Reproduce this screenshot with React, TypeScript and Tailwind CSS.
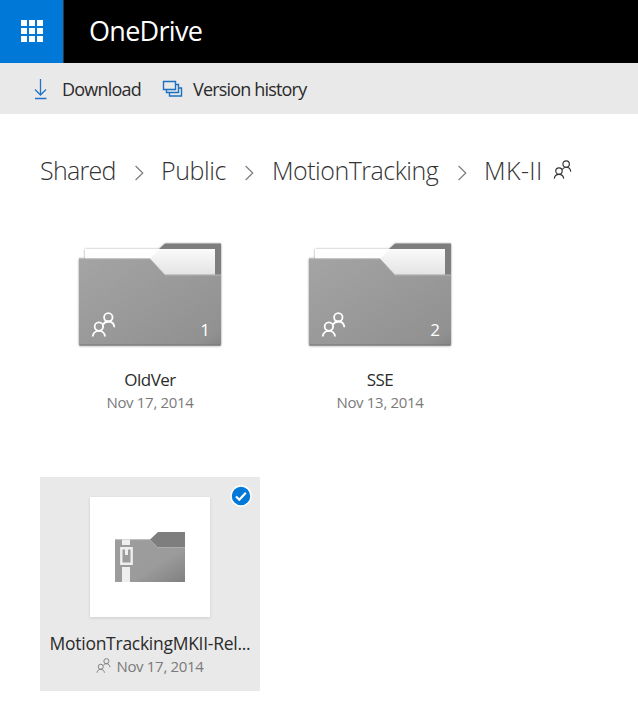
import React from 'react';

function People({ size, stroke, className = '' }: { size: number; stroke: number; className?: string }) {
  return (
    <svg width={size} height={size} viewBox="0 0 24 26" fill="none" stroke="currentColor" strokeWidth={stroke} className={`shrink-0 ${className}`}>
      <circle cx="17" cy="5.500" r="4.400" />
      <path d="M11.500 13c1.300-2 3.200-3.100 5.500-3.100 3.500 0 6 2.400 6.300 6" />
      <circle cx="7.200" cy="15.200" r="4.400" />
      <path d="M.8 25.500c.3-3.500 2.900-5.900 6.400-5.900s6.100 2.400 6.400 5.900" />
    </svg>
  );
}

function Chevron() {
  return (
    <svg width="9" height="16" viewBox="0 0 9 16" fill="none" stroke="#777" strokeWidth="1.1" className="mt-[5px] shrink-0">
      <path d="M.6 1 7.800 8 .6 15" />
    </svg>
  );
}

function Folder({ id, count }: { id: string; count: string }) {
  return (
    <div className="grid h-[106px] w-[146px]">
      <svg width="146" height="106" viewBox="0 0 146 106" className="col-start-1 row-start-1">
        <defs>
          <linearGradient id={`${id}-front`} x1="0" y1="0" x2="1" y2="1">
            <stop offset="0" stopColor="#a4a4a4" />
            <stop offset=".9" stopColor="#919191" />
            <stop offset="1" stopColor="#858585" />
          </linearGradient>
          <linearGradient id={`${id}-paper`} x1="0" y1="0" x2="0" y2="1">
            <stop offset="0" stopColor="#fafafa" />
            <stop offset="1" stopColor="#e4e4e4" />
          </linearGradient>
          <filter id={`${id}-shadow`} x="-5%" y="-5%" width="110%" height="110%">
            <feDropShadow dx="0" dy=".3" stdDeviation="1" floodColor="#000" floodOpacity=".45" />
          </filter>
        </defs>
        <g filter={`url(#${id}-shadow)`}>
          <path d="M82 15V7l6-5.500h56V40H82z" fill="#7e7e7e" />
          <path d="M8 7h76v28H8z" fill="#fff" />
          <path d="M2 16.500h71L88 33h56v69.500q0 1-1 1H3q-1 0-1-1z" fill={`url(#${id}-front)`} />
        </g>
        <path d="M8 7h130v25.500H88L73 16.500H8z" fill="#fff" />
        <path d="M83 7h55v25.500H88L73 16.500z" fill={`url(#${id}-paper)`} />
        <path d="M2 16.800h71L88 33h56" fill="none" stroke="#b5b5b5" />
        <path d="M2.500 103h141" stroke="#747474" />
      </svg>
      <div className="col-start-1 row-start-1 flex items-end justify-between pr-[13px] pb-[8px] pl-[14px] text-white">
        <People size={25} stroke={1.9} className="mb-[3px]" />
        <span className="text-[17px] leading-[20px]">{count}</span>
      </div>
    </div>
  );
}

function FolderTile({ id, name, date, count }: { id: string; name: string; date: string; count: string }) {
  return (
    <div className="flex h-[214px] w-[220px] flex-col items-center pt-[29px]">
      <Folder id={id} count={count} />
      <div className="mt-[20px] text-[17px] leading-[23px] tracking-[-0.5px] text-[#2b2b2b]">{name}</div>
      <div className="text-[15px] leading-[22px] tracking-[-0.32px] text-[#7a7a7a]">{date}</div>
    </div>
  );
}

export default function App() {
  return (
    <div className="h-[711px] w-[638px] overflow-hidden bg-white font-['Open_Sans','Noto_Sans',sans-serif]">
      <header className="flex h-[63px] bg-black text-white">
        <div className="flex w-16 justify-center border-r border-[#333] bg-[#0078d7] pt-[20px]">
          <div className="grid h-[22px] grid-cols-3 gap-[2px]">
            {Array.from({ length: 9 }, (_, i) => <span key={i} className="size-[6px] bg-white" />)}
          </div>
        </div>
        <h1 className="ml-[25px] text-[27px] leading-[62px] font-normal tracking-[-0.7px]">OneDrive</h1>
      </header>
      <nav className="flex h-[51px] items-center bg-[#e9e9e9] text-[18px] text-[#2b2b2b]">
        <svg width="14" height="22" viewBox="0 0 14 22" fill="none" stroke="#2472c8" className="ml-[34px]">
          <path d="M6.500 1v16M1 11.500l5.500 5.500 5.500-5.500M1 20.500h11.500" strokeWidth="1.300" />
        </svg>
        <span className="mt-[2px] ml-[14px] w-[100px] tracking-[-0.8px] whitespace-nowrap">Download</span>
        <svg width="22" height="18" viewBox="0 0 22 18" fill="none" stroke="#1b70c4" strokeWidth="1.400">
          <path d="M1.500 1.500h12v8h-12zM13.500 4.500h3v8h-12v-3M16.500 8h3v8h-12v-3.500" />
        </svg>
        <span className="mt-[2px] ml-[9px] tracking-[-0.82px] whitespace-nowrap">Version history</span>
      </nav>
      <main>
        <div className="flex h-[113px] items-center pl-[40px] text-[25px] font-light whitespace-nowrap text-[#333]">
          <span className="w-[95px] tracking-[-0.7px]">Shared</span>
          <Chevron />
          <span className="ml-[17px] w-[84px] tracking-[-0.4px]">Public</span>
          <Chevron />
          <span className="ml-[18px] w-[186px] tracking-[-0.5px]">MotionTracking</span>
          <Chevron />
          <span className="ml-[17px] w-[69px] tracking-[0.4px]">MK-II</span>
          <People size={19} stroke={1.6} className="mb-[2px]" />
        </div>
        <div className="-mt-[14px] grid grid-cols-[220px_220px] gap-x-[10px] gap-y-[50px] pl-[40px]">
          <FolderTile id="oldver" name="OldVer" date="Nov 17, 2014" count="1" />
          <FolderTile id="sse" name="SSE" date="Nov 13, 2014" count="2" />
          <div className="relative flex h-[214px] flex-col items-center bg-[#e9e9e9] pt-[20px]">
            <div className="flex size-[120px] items-center justify-center bg-white shadow-[0_1px_3px_rgba(0,0,0,0.12)]">
              <svg width="70" height="50" viewBox="0 0 70 50">
                <defs>
                  <linearGradient id="zip-front" x1="0" y1="0" x2="1" y2="1">
                    <stop offset="0" stopColor="#9d9d9d" />
                    <stop offset=".6" stopColor="#9b9b9b" />
                    <stop offset="1" stopColor="#808080" />
                  </linearGradient>
                </defs>
                <path d="M35 7.500 43 0h27v16H35z" fill="#7e7e7e" />
                <path d="M0 7.500h35l7.500 8H70V50H0z" fill="url(#zip-front)" />
                <path d="M0 7.700h35l7.500 7.800H70" fill="none" stroke="#b5b5b5" strokeWidth=".8" />
                <path d="M7 7.500h8V13H7zM7 35h8v15H7z" fill="#eee" />
                <path d="M6.300 16.300h10.400v15.400H6.300z" fill="none" stroke="#eee" strokeWidth="2.400" />
                <path d="M10 17h3v6h-3z" fill="#eee" />
              </svg>
            </div>
            <svg width="22" height="22" viewBox="0 0 22 22" className="absolute top-[8px] right-[8px]">
              <circle cx="11" cy="11" r="10" fill="#0078d7" stroke="#fff" strokeWidth="1.500" />
              <path d="m6 11.500 3.300 3.200 6.500-7" fill="none" stroke="#fff" strokeWidth="2.200" />
            </svg>
            <div className="mt-[15px] text-[17.500px] leading-[23px] tracking-[-0.27px] whitespace-nowrap text-[#2b2b2b]">MotionTrackingMKII-Rel...</div>
            <div className="flex items-center text-[15px] leading-[22px] tracking-[-0.32px] text-[#7a7a7a]">
              <People size={15} stroke={1.6} className="mr-[5px] mb-[1px]" />
              Nov 17, 2014
            </div>
          </div>
        </div>
      </main>
    </div>
  );
}
